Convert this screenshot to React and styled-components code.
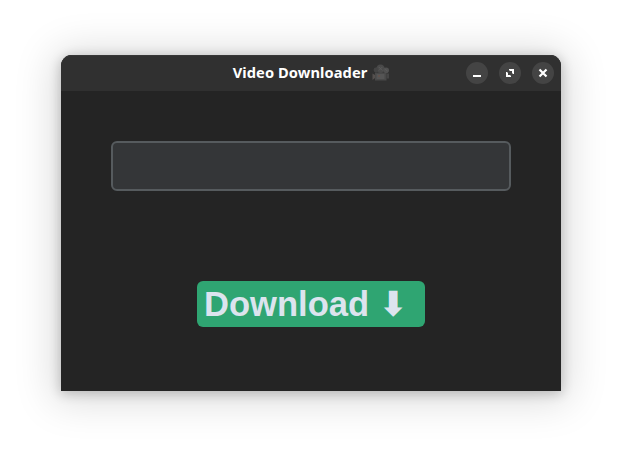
import React from "react";
import styled, { createGlobalStyle } from "styled-components";

const GlobalStyle = createGlobalStyle`
  * { box-sizing: border-box; }
  body { margin: 0; background: #fff; overflow: hidden; }
`;

const Desktop = styled.div`
  width: 622px;
  height: 458px;
  padding: 55px 61px 67px;
  background: #fff;
`;

const Window = styled.main`
  display: flex;
  flex-direction: column;
  width: 500px;
  height: 336px;
  border-radius: 11px 11px 0 0;
  background: #242424;
  box-shadow: 0 2px 12px 1px rgba(0, 0, 0, 0.2), 0 3px 40px 7px rgba(0, 0, 0, 0.15);
`;

const TitleBar = styled.header`
  display: grid;
  grid-template-columns: 1fr auto 1fr;
  align-items: center;
  height: 36px;
  padding-right: 7px;
  border-radius: 11px 11px 0 0;
  background: #303030;
  box-shadow: inset 0 1px #373737;
`;

const Title = styled.h1`
  grid-column: 2;
  display: flex;
  align-items: center;
  gap: 5px;
  height: 20px;
  margin: 0 0 2px 8px;
  font: 700 14.67px/20px "Noto Sans", sans-serif;
  letter-spacing: 0.08px;
  color: #fff;
  white-space: nowrap;
`;

const Controls = styled.div`
  grid-column: 3;
  display: flex;
  justify-content: flex-end;
  gap: 11px;
`;

const ControlButton = styled.button`
  width: 22px;
  height: 22px;
  padding: 0;
  border: 0;
  border-radius: 50%;
  background: #444;
  color: #fff;

  svg { display: block; }
`;

const Content = styled.form`
  display: flex;
  flex: 1;
  flex-direction: column;
  align-items: center;
  gap: 90px;
  padding-top: 50px;
`;

const UrlInput = styled.input`
  width: 400px;
  height: 50px;
  padding: 0 10px;
  border: 2px solid #565b5e;
  border-radius: 6px;
  outline: 0;
  background: #343638;
  color: #dce4ee;
  font: 16px "Liberation Sans", sans-serif;
`;

const DownloadButton = styled.button`
  display: flex;
  align-items: center;
  width: 228px;
  height: 46px;
  padding: 1px 7px 0;
  border: 0;
  border-radius: 6px;
  background: #2fa572;
  color: #dce4ee;
  font: 700 34.6px/45px "Liberation Sans", sans-serif;
  white-space: pre;
`;

const Arrow = styled.span`
  font-family: "DejaVu Sans", sans-serif;
`;

const CameraIcon = styled.svg`
  display: block;
  margin-top: 2px;
`;

function Camera() {
  return (
    <CameraIcon width="18" height="18" viewBox="0 0 18 18" aria-hidden="true">
      <path d="M.5 9.5 3 11v3L.5 16z" fill="#55504e" />
      <path d="M3 8.5h11.5v8H3z" fill="#494949" />
      <path d="M4.5 10h8v5h-8z" fill="#555" />
      <path d="M14.5 9.5H17v5h-2.5z" fill="#454545" />
      <circle cx="8.5" cy="4.8" r="4.3" fill="#4a4a4a" />
      <circle cx="14.2" cy="6.2" r="2.8" fill="#505050" />
      <circle cx="4" cy="6" r="2.4" fill="#444" />
      <path d="m6.8 3 3.5 3.5m0-3.5L6.8 6.5m6.2-1.7 2.5 2.6" stroke="#5d5d5d" strokeWidth=".8" />
      <path d="M6 12h2" stroke="#705047" />
    </CameraIcon>
  );
}

function ControlIcon({ name }) {
  return (
    <svg width="22" height="22" viewBox="0 0 22 22" fill="currentColor" aria-hidden="true">
      {name === "minimize" && <path d="M7 13h8v2H7z" />}
      {name === "maximize" && <path d="M10 7h5v5h-1l-1-1V9h-2l-1-1zM7 10h1l1 1v2h2l1 1v1H7z" />}
      {name === "close" && <path d="m7.5 7.5 7 7m0-7-7 7" fill="none" stroke="currentColor" strokeWidth="2.2" />}
    </svg>
  );
}

export default function App() {
  return (
    <>
      <GlobalStyle />
      <Desktop>
        <Window>
          <TitleBar>
            <Title>Video Downloader <Camera /></Title>
            <Controls>
              {["minimize", "maximize", "close"].map((name) => (
                <ControlButton key={name} aria-label={name}>
                  <ControlIcon name={name} />
                </ControlButton>
              ))}
            </Controls>
          </TitleBar>
          <Content>
            <UrlInput aria-label="Video URL" />
            <DownloadButton type="button">Download <Arrow>⬇</Arrow></DownloadButton>
          </Content>
        </Window>
      </Desktop>
    </>
  );
}
